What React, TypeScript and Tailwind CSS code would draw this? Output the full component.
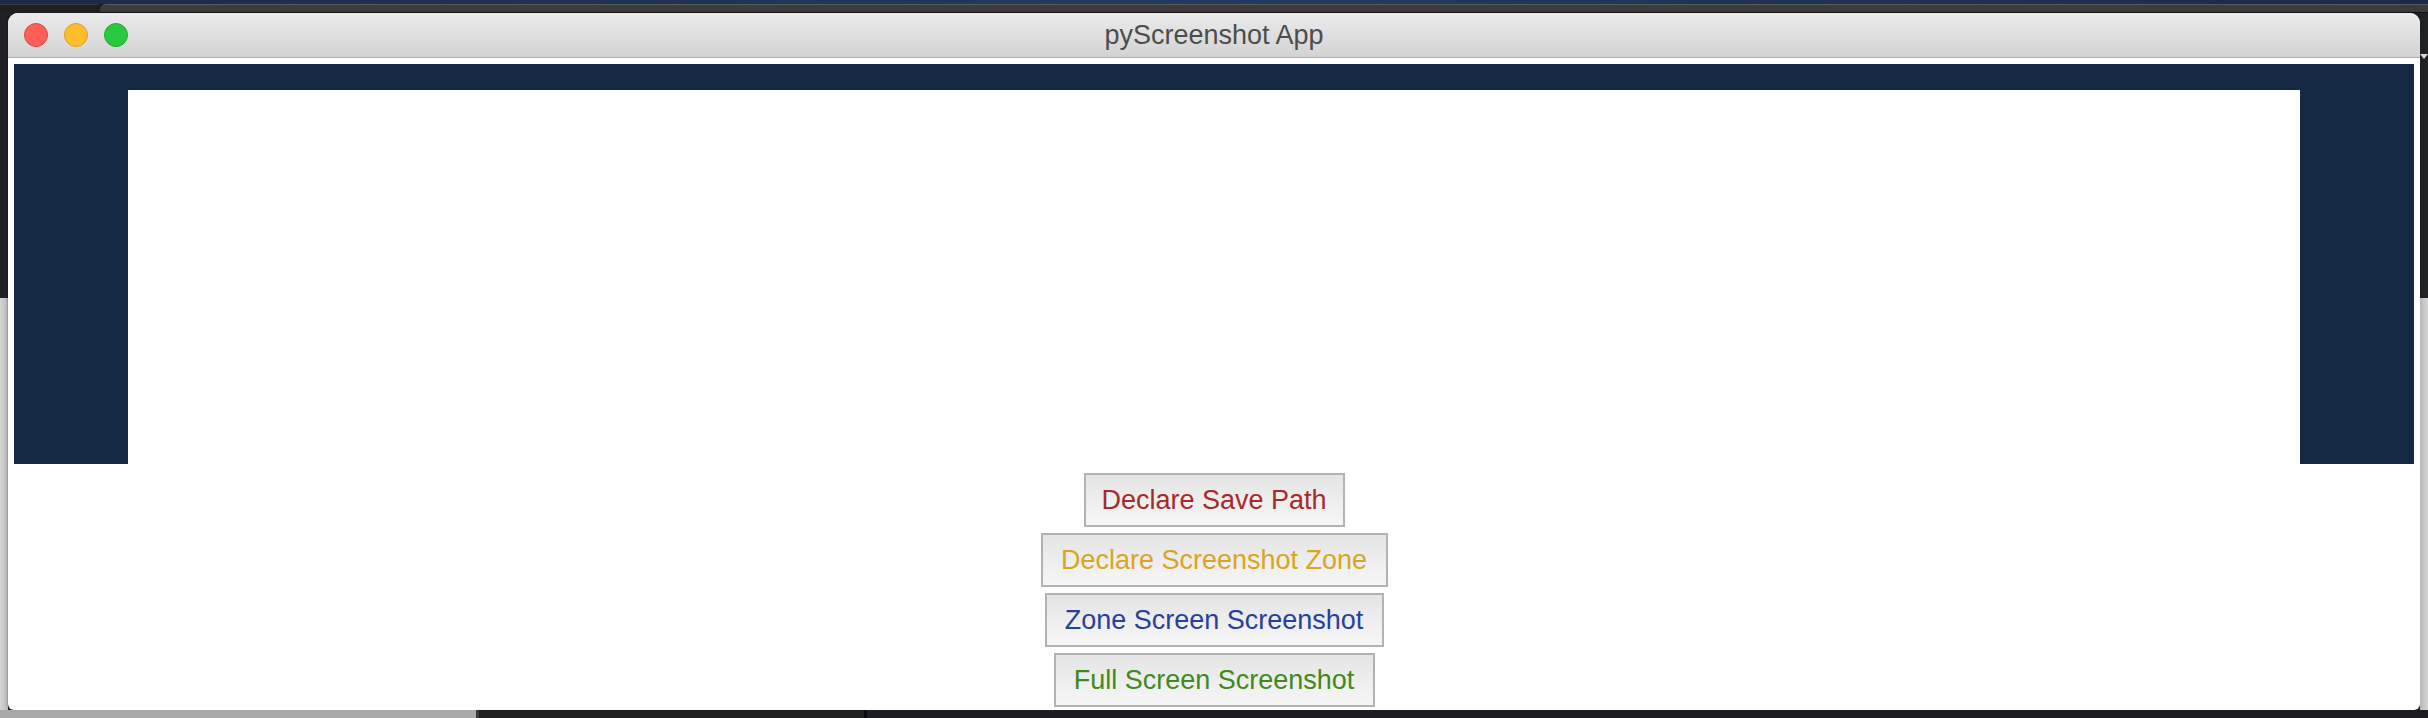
import React from "react";

const buttons = [
  { label: "Declare Save Path", color: "text-[#a52a2a]", w: "w-[261px]" },
  { label: "Declare Screenshot Zone", color: "text-[#daa520]", w: "w-[347px]" },
  { label: "Zone Screen Screenshot", color: "text-[#27409b]", w: "w-[339px]" },
  { label: "Full Screen Screenshot", color: "text-[#3f8a1b]", w: "w-[321px]" },
];

export default function App() {
  return (
    <div
      className="w-[2428px] h-[718px] flex flex-col overflow-hidden bg-[#202124]"
      style={{ fontFamily: '"Liberation Sans", Arial, sans-serif' }}
    >
      {/* desktop top strip */}
      <div className="h-[4px] bg-gradient-to-r from-[#1a2a46] via-[#233a60] to-[#1a2a46]" />
      <div className="h-[9px] flex bg-[#161616]">
        <div className="w-[100px] bg-[#1f1f1f] border-t border-[#3a3a3a] rounded-tr-[4px]" />
        <div className="flex-1 bg-[#3b3b3b] border-t border-[#5a5a5a] border-b border-b-[#111] rounded-tl-[6px]" />
      </div>

      {/* middle row */}
      <div className="h-[697px] flex">
        <div className="w-[8px] flex flex-col">
          <div className="h-[285px] bg-[#202124]" />
          <div className="flex-1 bg-gradient-to-r from-[#d6d6d6] to-[#b8b8b8]" />
        </div>

        {/* window */}
        <div className="w-[2412px] h-[697px] flex flex-col bg-white rounded-t-[10px] rounded-b-[6px] overflow-hidden shadow-[0_0_2px_rgba(0,0,0,0.6)]">
          {/* title bar */}
          <div className="relative h-[45px] shrink-0 flex items-center bg-gradient-to-b from-[#ebebeb] to-[#d3d3d3] border-b border-[#b1b1b1]">
            <div className="flex items-center gap-[16px] pl-[16px]">
              <span className="w-[24px] h-[24px] rounded-full bg-[#fe5f57] border border-[#e2463f]" />
              <span className="w-[24px] h-[24px] rounded-full bg-[#febc2e] border border-[#dfa123]" />
              <span className="w-[24px] h-[24px] rounded-full bg-[#28c840] border border-[#1dad2b]" />
            </div>
            <div className="absolute inset-0 flex items-center justify-center text-[27px] text-[#4d4d4d] pointer-events-none">
              pyScreenshot App
            </div>
          </div>

          {/* content */}
          <div className="flex-1 flex flex-col items-center pt-[6px] px-[6px]">
            <div className="w-full h-[400px] bg-[#162944] flex justify-center pt-[26px]">
              <div className="w-[2172px] h-[374px] bg-white" />
            </div>

            <div className="flex flex-col items-center gap-[6px] mt-[9px]">
              {buttons.map((b) => (
                <button
                  key={b.label}
                  className={`${b.w} h-[54px] ${b.color} text-[27px] leading-none border-2 border-[#b3b3b3] bg-gradient-to-b from-[#e5e5e5] to-[#f6f6f6] flex items-center justify-center`}
                >
                  {b.label}
                </button>
              ))}
            </div>
          </div>
        </div>

        <div className="w-[8px] flex flex-col">
          <div className="h-[285px] bg-[#202124] flex flex-col">
            <div className="h-[41px]" />
            <svg width="8" height="6" viewBox="0 0 8 6">
              <path d="M0 0 L8 0 L4 5 Z" fill="#d8d8d8" />
            </svg>
          </div>
          <div className="flex-1 bg-gradient-to-r from-[#b8b8b8] to-[#d6d6d6]" />
        </div>
      </div>

      {/* bottom strip */}
      <div className="flex-1 flex">
        <div className="w-[476px] bg-[#a9a9a9]" />
        <div className="w-[3px] bg-[#3a3a3a]" />
        <div className="w-[385px] bg-[#1f1f1f]" />
        <div className="w-[3px] bg-[#0a0a0a]" />
        <div className="flex-1 bg-[#1b1d22]" />
      </div>
    </div>
  );
}
